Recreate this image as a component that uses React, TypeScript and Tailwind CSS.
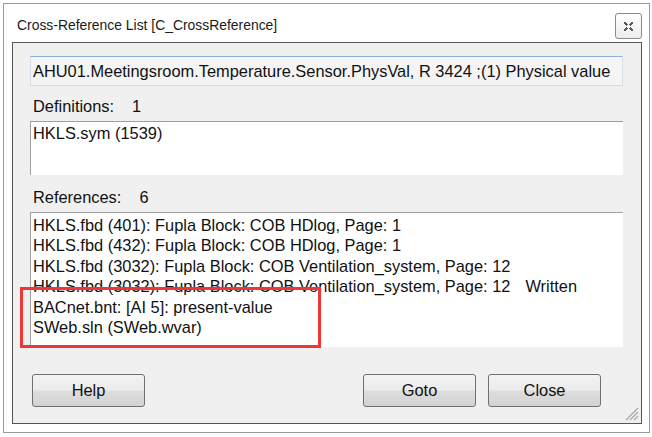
import React from 'react';

const refs = [
  'HKLS.fbd (401): Fupla Block: COB HDlog, Page: 1',
  'HKLS.fbd (432): Fupla Block: COB HDlog, Page: 1',
  'HKLS.fbd (3032): Fupla Block: COB Ventilation_system, Page: 12',
];

const Btn = ({ label }: { label: string }) => (
  <button className="w-[113px] h-[33px] rounded-[3px] border border-[#707070] bg-[linear-gradient(#f3f3f3_0%,#ebebeb_48%,#dddddd_52%,#d2d2d2_100%)] text-[16.4px] text-[#111] leading-none">
    {label}
  </button>
);

export default function App() {
  return (
    <div className="w-[652px] h-[437px] bg-white relative overflow-hidden font-['Liberation_Sans',Arial,sans-serif]">
      <div className="ml-[3px] mt-[3px] w-[647px] h-[430px] border border-[#9a9a9a] bg-white pl-[8px] pr-[7px] pb-[8px] flex flex-col">
        {/* title bar */}
        <div className="h-[38px] flex items-start justify-between">
          <span className="mt-[15px] ml-[5px] text-[13.9px] text-[#1a1a1a] leading-none">
            Cross-Reference List [C_CrossReference]
          </span>
          <div className="mt-[9px] w-[27px] h-[26px] rounded-[3px] border border-[#8a8a8a] bg-[linear-gradient(#ffffff,#ececec)] flex items-center justify-center">
            <svg width="11" height="11" viewBox="0 0 11 11">
              <path d="M1 1h2v1h1v1h1v1h1V3h1V2h1V1h2v2H9v1H8v1H7v1h1v1h1v1h1v2H8V9H7V8H6V7H5v1H4v1H3v1H1V8h1V7h1V6h1V5H3V4H2V3H1z" fill="#5a5a5a" />
              <path d="M4 4h3v3H4z" fill="#ffffff" />
            </svg>
          </div>
        </div>

        {/* client area */}
        <div className="relative flex-1 border border-[#555] bg-[#f0f0f0] pl-[17px] pr-[18px] flex flex-col text-[16.4px]">
          <div className="mt-[13px] h-[30px] border border-[#d5dde8] border-t-[#8fb1d8] bg-[#f4f4f4] flex items-center pl-[2px] text-[#111] whitespace-nowrap overflow-hidden">
            AHU01.Meetingsroom.Temperature.Sensor.PhysVal, R 3424 ;(1) Physical value
          </div>

          <div className="mt-[10px] h-[20px] leading-[20px] pl-[3px] text-[#111]">
            Definitions:<span className="ml-[18px]">1</span>
          </div>
          <div className="mt-[5px] h-[54px] bg-white border-t border-l border-[#a0a0a0] pl-[2px] pt-[1px] leading-[20.4px] text-[#111]">
            HKLS.sym (1539)
          </div>

          <div className="mt-[12px] h-[20px] leading-[20px] pl-[3px] text-[#111]">
            References:<span className="ml-[18px]">6</span>
          </div>
          <div className="mt-[5px] h-[135px] bg-white border-t border-l border-[#a0a0a0] pl-[2px] pt-[2px] leading-[20.4px] text-[#111] whitespace-nowrap overflow-hidden">
            {refs.map((r) => (
              <div key={r}>{r}</div>
            ))}
            <div>
              HKLS.fbd (3032): Fupla Block: COB Ventilation_system, Page: 12
              <span className="ml-[15px]">Written</span>
            </div>
            <div>BACnet.bnt: [AI 5]: present-value</div>
            <div>SWeb.sln (SWeb.wvar)</div>
          </div>

          <div className="mt-[27px] pl-[2px] pr-[22px] flex justify-between">
            <Btn label="Help" />
            <div className="flex gap-[12px]">
              <Btn label="Goto" />
              <Btn label="Close" />
            </div>
          </div>

          {/* highlight annotation */}
          <div className="absolute left-[7px] top-[244px] w-[301px] h-[61px] border-[3px] border-[#ef3535]" />

          {/* size grip */}
          <svg className="absolute right-[2px] bottom-[2px]" width="16" height="16" viewBox="0 0 16 16">
            <path d="M15 3L3 15M15 7L7 15M15 11L11 15" stroke="#a8a8a8" strokeWidth="1.3" />
          </svg>
        </div>
      </div>
    </div>
  );
}
